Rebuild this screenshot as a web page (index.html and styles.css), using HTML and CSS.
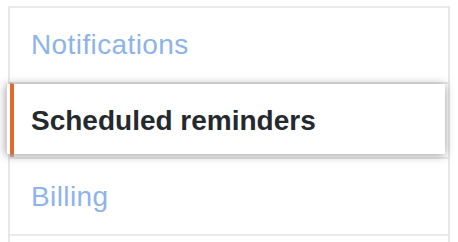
FILE: index.html
```html
<!DOCTYPE html>
<html lang="en">
<head>
  <meta charset="UTF-8">
  <meta name="viewport" content="width=device-width, initial-scale=1.0">
  <title>Settings menu</title>
  <link rel="stylesheet" href="styles.css">
</head>
<body>

  <nav class="menu">
    <a href="#" class="menu-item">Notifications</a>
    <div class="menu-item selected">
      <a href="#" class="lifted">Scheduled reminders</a>
    </div>
    <a href="#" class="menu-item billing">Billing</a>
    <div class="menu-item last"></div>
  </nav>

</body>
</html>
```

FILE: styles.css
```css
/* Estilos globales */
* {
  margin: 0;
  padding: 0;
  box-sizing: border-box;
  font-family: 'Liberation Sans', Arial, sans-serif;
}

body {
  background: #fff;
  padding-top: 6px;
  overflow: hidden;
}

.menu {
  margin-left: 8px;
  width: 442px;
  border-left: 2px solid #e8e8e8;
  border-right: 2px solid #e8e8e8;
}

.menu-item {
  display: block;
  height: 76px;
  border-top: 2px solid #eaeaea;
  padding: 21px 0 0 21px;
  font-size: 28px;
  line-height: 32px;
  color: #8db3ea;
  text-decoration: none;
  letter-spacing: 0.4px;
}

.menu-item.selected {
  height: 75px;
  padding: 0;
  border-left: 4px solid #d9b49a;
}

.lifted {
  display: block;
  height: 70px;
  margin: 0 3px 0 -8px;
  padding: 21px 0 0 24px;
  background: linear-gradient(to right, #fff 3px, #e0692b 3px, #e0692b 7px, #fff 7px);
  border-left: 1px solid #d4d4d4;
  box-shadow: 0 1px 9px rgba(0, 0, 0, 0.4);
  color: #24292e;
  font-weight: bold;
  text-decoration: none;
  letter-spacing: 0;
  position: relative;
}

.billing {
  height: 77px;
  padding-top: 22px;
}

.last {
  height: 6px;
}
```
